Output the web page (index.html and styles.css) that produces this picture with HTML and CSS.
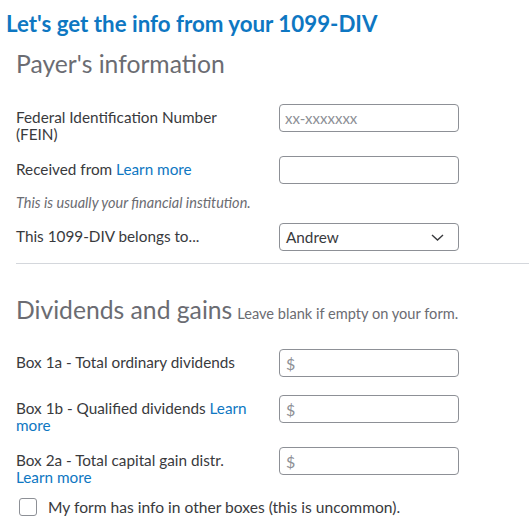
FILE: index.html
```html
<!DOCTYPE html>
<html>
<head>
<meta charset="utf-8">
<link rel="stylesheet" href="styles.css">
</head>
<body>
<div class="page">
  <h1 class="title">Let's get the info from your 1099-DIV</h1>
  <h2 class="section-title">Payer's information</h2>

  <div class="row row-fein">
    <div class="label">Federal Identification Number<br>(FEIN)</div>
    <div class="field"><input class="input" type="text" placeholder="xx-xxxxxxx"></div>
  </div>

  <div class="row row-received">
    <div class="label">Received from <a class="link">Learn more</a></div>
    <div class="field"><input class="input" type="text"></div>
  </div>
  <p class="hint">This is usually your financial institution.</p>

  <div class="row row-belongs">
    <div class="label">This 1099-DIV belongs to...</div>
    <div class="field">
      <div class="select">
        <span>Andrew</span>
        <svg class="chevron" width="13" height="7" viewBox="0 0 13 7"><path d="M1 1 L6.5 6 L12 1" fill="none" stroke="#393a3d" stroke-width="1.4"/></svg>
      </div>
    </div>
  </div>

  <hr class="divider">

  <div class="section-head">
    <span class="section-title inline">Dividends and gains</span>
    <span class="section-note">Leave blank if empty on your form.</span>
  </div>

  <div class="row row-1a">
    <div class="label">Box 1a - Total ordinary dividends</div>
    <div class="field"><div class="money"><span class="dollar">$</span></div></div>
  </div>

  <div class="row row-1b">
    <div class="label">Box 1b - Qualified dividends <a class="link">Learn</a><br><a class="link">more</a></div>
    <div class="field"><div class="money"><span class="dollar">$</span></div></div>
  </div>

  <div class="row row-2a">
    <div class="label">Box 2a - Total capital gain distr.<br><a class="link">Learn more</a></div>
    <div class="field"><div class="money"><span class="dollar">$</span></div></div>
  </div>

  <label class="check">
    <span class="box"></span>
    <span class="check-text">My form has info in other boxes (this is uncommon).</span>
  </label>
</div>
</body>
</html>
```

FILE: styles.css
```css
* { box-sizing: border-box; }
html, body { margin: 0; padding: 0; background: #fff; }
body {
  font-family: Lato, "Noto Sans", sans-serif;
  color: #393a3d;
  font-size: 15.3px;
}
.page {
  padding: 0 0 0 16px;
  width: 529px;
  overflow: hidden;
}
.title {
  margin: 0 0 0 -10px;
  padding-top: 11px;
  font-size: 22.3px;
  line-height: 26px;
  font-weight: 700;
  color: #0e77c2;
}
.section-title {
  margin: 0;
  padding-top: 12px;
  font-size: 24.7px;
  line-height: 30px;
  font-weight: 400;
  color: #6b6c72;
}
.section-title.inline { padding-top: 0; }
.row {
  display: flex;
  align-items: flex-start;
}
.label {
  width: 263px;
  flex: none;
  padding-top: 5px;
  line-height: 17px;
  padding-right: 10px;
}
.field { width: 180px; flex: none; }
.link { color: #0e77c2; text-decoration: none; }
.input, .select, .money {
  display: block;
  width: 180px;
  height: 28px;
  border: 1px solid #8d9096;
  border-radius: 4px;
  background: #fff;
  font-family: inherit;
  font-size: 15px;
  color: #393a3d;
  padding: 0 5px;
  outline: none;
}
.input::placeholder { color: #8d9096; font-size: 15px; }
.row-fein { margin-top: 25px; }
.row-received { margin-top: 13px; }
.hint {
  margin: 10px 0 0 0;
  font-style: italic;
  font-size: 14.5px;
  line-height: 17px;
  color: #6b6c72;
}
.row-belongs { margin-top: 12px; }
.select {
  display: flex;
  align-items: center;
  justify-content: space-between;
  padding: 0 14px 0 6px;
  font-size: 15.3px;
}
.chevron { display: block; }
.divider {
  margin: 12px 0 0 0;
  border: 0;
  border-top: 1px solid #d4d7dc;
  height: 0;
}
.section-head {
  margin-top: 31px;
  display: flex;
  align-items: baseline;
  gap: 5px;
}
.section-note { font-size: 14.6px; color: #6b6c72; }
.row-1a { margin-top: 24px; }
.row-1b { margin-top: 18px; }
.row-2a { margin-top: 13px; }
.money { display: flex; align-items: center; padding-left: 6px; }
.dollar { color: #8d9096; font-size: 16px; }
.check {
  display: flex;
  align-items: center;
  margin-top: 11px;
  padding-left: 3px;
}
.box {
  width: 18px;
  height: 18px;
  border: 1px solid #8d9096;
  border-radius: 3px;
  flex: none;
}
.check-text { margin-left: 11px; font-size: 15.6px; line-height: 20px; }
```
